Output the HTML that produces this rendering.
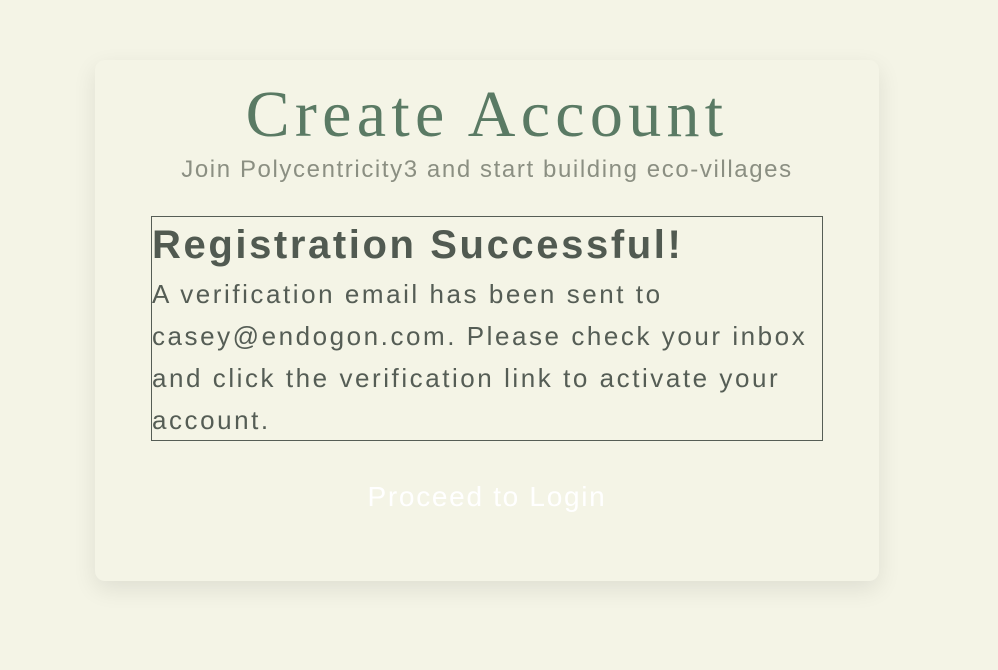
<!DOCTYPE html>
<html><head><style>
body{margin:0;background:#f4f4e6;width:998px;height:670px;overflow:hidden;font-family:"Liberation Sans",sans-serif;}
.card{position:absolute;left:95px;top:60px;width:784px;height:521px;background:#f4f4e6;border-radius:10px;box-shadow:0 8px 24px rgba(0,0,0,0.09);}
h1{position:absolute;left:0;width:784px;top:17px;margin:0;text-align:center;font-family:"Liberation Serif",serif;font-weight:normal;font-size:66px;color:#5a7a64;letter-spacing:5.3px;}
.sub{position:absolute;left:0;width:784px;top:96px;text-align:center;font-size:24px;color:#8b8f82;letter-spacing:1.6px;}
.box{position:absolute;left:56px;top:156px;width:670px;height:223px;border:1px solid #555d55;}
.box h2{margin:0;position:absolute;left:0;top:6px;font-size:40px;font-weight:bold;color:#515a51;white-space:nowrap;letter-spacing:2.6px;}
.box p{margin:0;position:absolute;left:0;top:56px;font-size:26px;line-height:42px;color:#555d55;letter-spacing:2.55px;white-space:nowrap;}
.btn{position:absolute;left:0;width:784px;top:421px;text-align:center;font-size:28px;color:#fff;letter-spacing:1.7px;}
</style></head><body>
<div class="card">
<h1>Create Account</h1>
<div class="sub">Join Polycentricity3 and start building eco-villages</div>
<div class="box">
<h2>Registration Successful!</h2>
<p>A verification email has been sent to<br>casey@endogon.com. Please check your inbox<br>and click the verification link to activate your<br>account.</p>
</div>
<div class="btn">Proceed to Login</div>
</div>
</body></html>
